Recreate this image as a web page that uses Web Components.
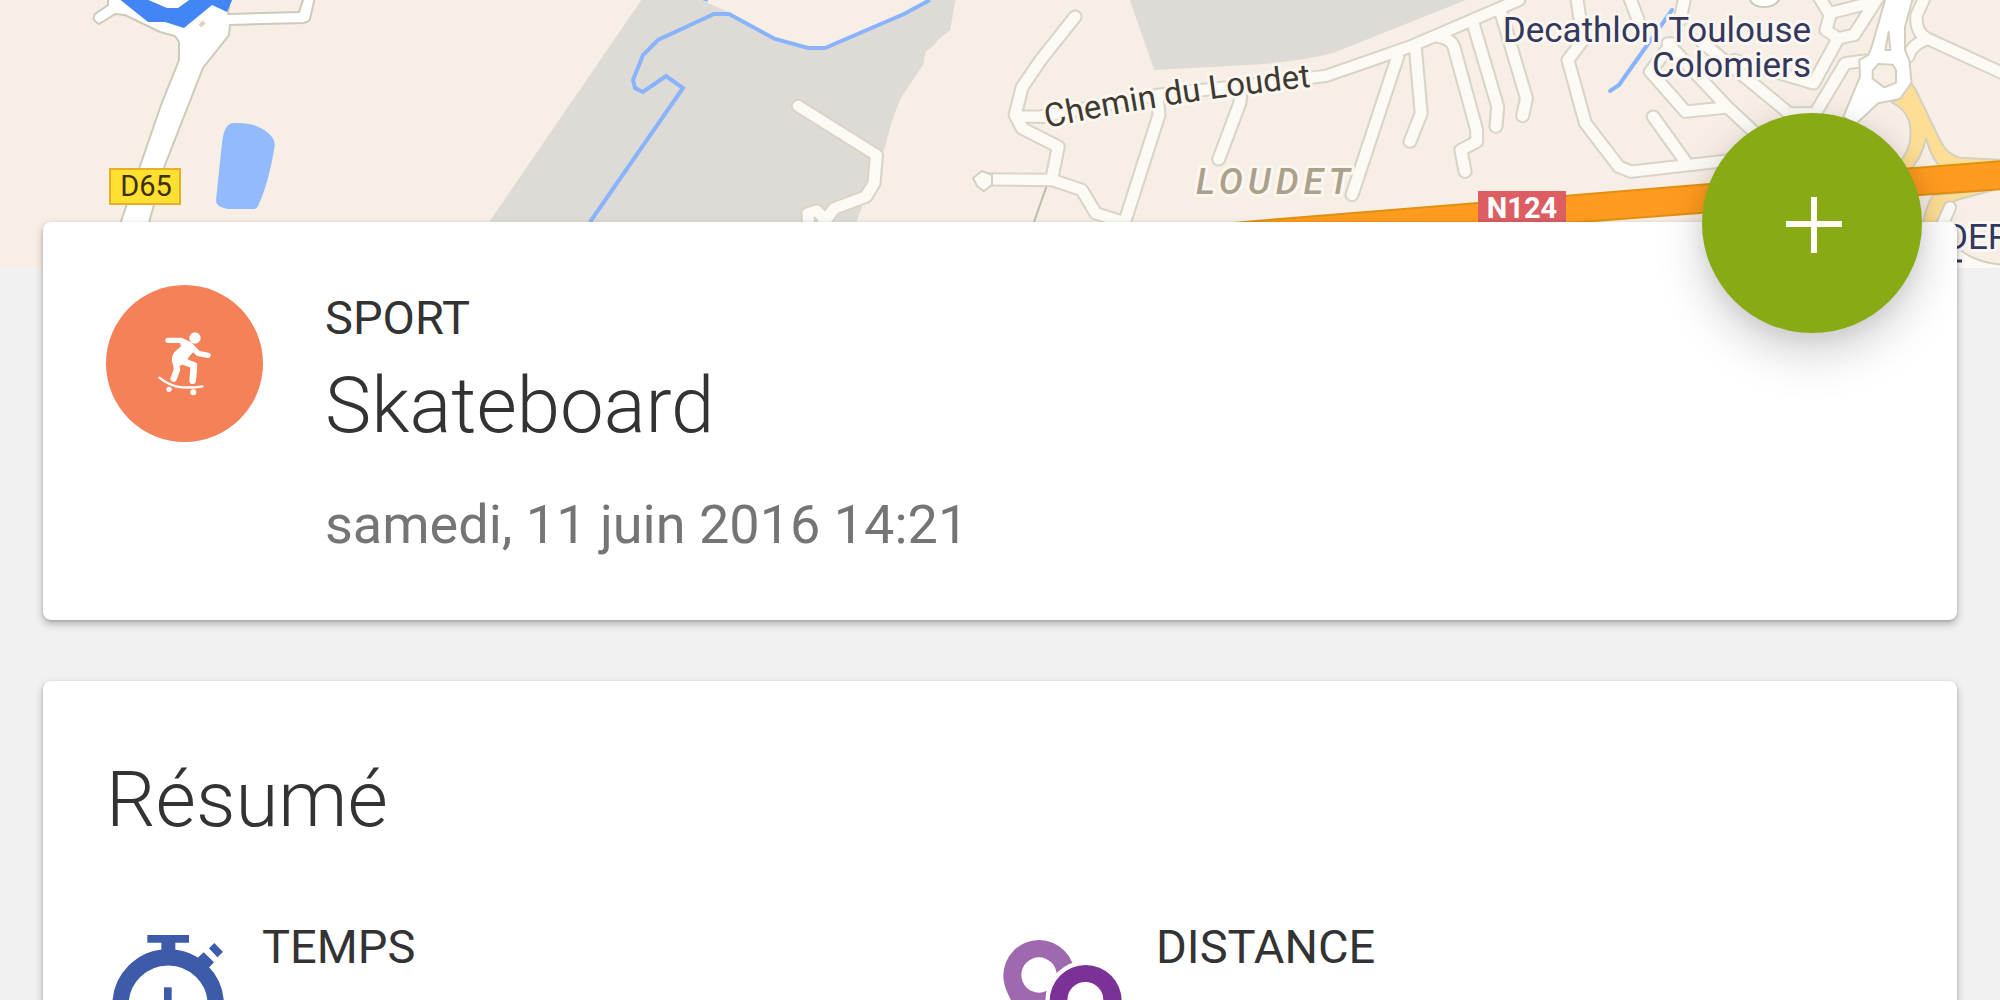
<!DOCTYPE html>
<html lang="fr">
<head>
<meta charset="utf-8">
<meta name="viewport" content="width=device-width, initial-scale=1">
<title>Skateboard</title>
<style>
  body { margin: 0; background: #f1f1f1; color: #333; font-family: Roboto, "Liberation Sans", sans-serif; }
</style>
</head>
<body>
<activity-page>
  <activity-map slot="map"></activity-map>
  <surface-card>
    <activity-header kind="SPORT" name="Skateboard" date="samedi, 11 juin 2016 14:21" datetime="2016-06-11T14:21"></activity-header>
    <fab-button slot="action" label="Ajouter"></fab-button>
  </surface-card>
  <surface-card>
    <summary-section heading="Résumé">
      <stat-item label="TEMPS"><stopwatch-icon slot="icon"></stopwatch-icon></stat-item>
      <stat-item label="DISTANCE"><pins-icon slot="icon"></pins-icon></stat-item>
    </summary-section>
  </surface-card>
</activity-page>

<script>
class BaseElement extends HTMLElement {
  connectedCallback() {
    if (this.shadowRoot) return;
    this.attachShadow({ mode: 'open' }).innerHTML = this.render();
  }
  attr(name) { return this.getAttribute(name) || ''; }
}

customElements.define('activity-page', class extends BaseElement {
  render() {
    return `<style>
      :host { display: block; height: 100vh; overflow: hidden; }
      main { display: flex; flex-direction: column; gap: 61px; margin-top: -46px; padding: 0 43px 61px; position: relative; }
    </style>
    <slot name="map"></slot>
    <main><slot></slot></main>`;
  }
});

customElements.define('surface-card', class extends BaseElement {
  render() {
    return `<style>
      :host { display: block; position: relative; background: #fff; border-radius: 8px; padding: 0 63px;
        box-shadow: 0 4px 8px rgba(0,0,0,.26), 0 1px 3px rgba(0,0,0,.16); }
    </style><slot></slot><slot name="action"></slot>`;
  }
});

customElements.define('fab-button', class extends BaseElement {
  render() {
    return `<style>
      :host { position: absolute; top: -109px; right: 35px; }
      button { display: flex; align-items: center; justify-content: center; width: 220px; height: 220px;
        padding: 0; border: 0; border-radius: 50%; background: #88aa14; cursor: pointer;
        box-shadow: 0 20px 48px rgba(0,0,0,.18), 0 4px 20px rgba(0,0,0,.08); }
      svg { width: 60px; height: 60px; }
    </style>
    <button type="button" aria-label="${this.attr('label')}">
      <svg viewBox="0 0 60 60" aria-hidden="true"><path d="M32 4V60M4 31H60" stroke="#fff" stroke-width="6"/></svg>
    </button>`;
  }
});

customElements.define('activity-header', class extends BaseElement {
  render() {
    return `<style>
      :host { display: flex; align-items: flex-start; gap: 62px; padding: 63px 0; }
      .text { padding-top: 5px; }
      .badge { flex: none; width: 157px; height: 157px; }
      p, h1 { margin: 0; }
      .kind { font-size: 47px; line-height: 56px; }
      h1 { margin-top: 14px; font-size: 78px; line-height: 92px; font-weight: 300; }
      time { display: block; margin-top: 41px; font-size: 54px; line-height: 64px; color: #757575; }
    </style>
    <svg class="badge" viewBox="77 76 471 471" aria-hidden="true">
      <circle cx="312.500" cy="311.500" r="235.500" fill="#f58159"/>
      <g fill="none" stroke="#fff" stroke-linecap="round" stroke-linejoin="round">
        <path d="M263 242H302L330 256L353 281L383 287" stroke-width="16"/>
        <path d="M303 303L341 317L337 363" stroke-width="20"/>
        <path d="M285 300L290 330L280 357" stroke-width="19"/>
        <path d="M237 354Q268 380 305 383Q337 385 366 380" stroke-width="7"/>
      </g>
      <g fill="#fff">
        <path d="M298 248L325 247L347 270L336 281Q322 293 320 306L300 318L278 314Q270 294 282 278L302 260Z"/>
        <circle cx="344" cy="235" r="17"/><circle cx="266" cy="389" r="8"/><circle cx="339" cy="398" r="9"/>
      </g>
    </svg>
    <div class="text">
      <p class="kind">${this.attr('kind')}</p>
      <h1>${this.attr('name')}</h1>
      <time datetime="${this.attr('datetime')}">${this.attr('date')}</time>
    </div>`;
  }
});

customElements.define('summary-section', class extends BaseElement {
  render() {
    return `<style>
      :host { display: block; padding: 73px 0; }
      h2 { margin: 0; font-size: 78px; line-height: 92px; font-weight: 300; }
      .grid { display: grid; grid-template-columns: 1fr 1fr; margin-top: 73px; }
    </style>
    <h2>${this.attr('heading')}</h2>
    <div class="grid"><slot></slot></div>`;
  }
});

customElements.define('stat-item', class extends BaseElement {
  render() {
    return `<style>
      :host { display: flex; align-items: flex-start; gap: 32px; }
      p { margin: 0; font-size: 47px; line-height: 56px; }
    </style>
    <slot name="icon"></slot><p>${this.attr('label')}</p>`;
  }
});

const iconStyle = `<style>:host { display: block; flex: none; width: 124px; height: 160px; } svg { display: block; width: 100%; height: 100%; }</style>`;

customElements.define('stopwatch-icon', class extends BaseElement {
  render() {
    return `${iconStyle}<svg viewBox="78 57 372 480" aria-hidden="true" fill="#3d5ba9">
      <path d="M202 105H327V128H286V160H244V128H202Z"/>
      <path d="M403 129L429 156L412 172L387 145ZM371 157L402 187L382 208L346 180Z"/>
      <circle cx="264.500" cy="315" r="143" fill="none" stroke="#3d5ba9" stroke-width="49"/>
      <path d="M252 262H275V330H252Z"/>
    </svg>`;
  }
});

customElements.define('pins-icon', class extends BaseElement {
  render() {
    return `${iconStyle}<svg viewBox="60 57 372 480" aria-hidden="true">
      <path fill="#9e69af" fill-rule="evenodd" d="M177 120A107 107 0 0 1 284 227C284 290 210 370 177 450C144 370 70 290 70 227A107 107 0 0 1 177 120ZM177 172A53 53 0 1 0 177 278A53 53 0 1 0 177 172Z"/>
      <path fill="#7b3196" stroke="#fff" stroke-width="26" paint-order="stroke" d="M317 195A108 108 0 0 1 425 303C425 370 350 440 317 520C284 440 209 370 209 303A108 108 0 0 1 317 195Z"/>
      <circle cx="316" cy="300" r="54" fill="#fff"/>
    </svg>`;
  }
});

customElements.define('activity-map', class extends BaseElement {
  render() {
    return `<style>
      :host { display: block; height: 268px; background: #f7eee5; }
      svg { display: block; width: 100%; height: 100%; }
      text { paint-order: stroke; stroke: #fbf6f0; stroke-width: 6px; stroke-linejoin: round; }
      .place { font-size: 35px; fill: #33385f; }
      .street { font-size: 33px; fill: #3e3a30; }
      .district { font-size: 36px; font-style: italic; font-weight: 500; fill: #aba08a; letter-spacing: 5px; }
      .shield { font-size: 29px; stroke: none; text-anchor: middle; }
    </style>
    <svg viewBox="0 0 2000 268" preserveAspectRatio="xMidYMin slice" role="img" aria-label="Carte">
      <defs>
        <g id="roads" fill="none" stroke-linejoin="round" stroke-linecap="round">
          <g transform="scale(.351 .3333)">
            <path transform="translate(1282 0)" d="M992 318L1215 465L1208 550L1185 590L1095 625L1050 690M1022 690L1020 640L1045 632L1066 655"/>
            <g transform="translate(2707 0)">
              <path d="M356 50L258 180L205 262L185 345L205 385L308 440L290 535M195 350H280M100 538L290 540L375 570L415 640L490 665M490 690L595 345L590 290M765 478L825 310L830 270"/>
              <path d="M260 350L590 285L830 258L1070 228L1310 140L1620 0M1145 585L1275 170M1310 425L1342 340L1325 140M1467 515L1455 450L1500 425L1500 390L1435 140Q1425 115 1390 110M1555 380L1560 320L1490 70"/>
            </g>
            <g transform="translate(4132 0)">
              <path d="M206 348L217 295L145 40M360 -10L378 120L335 180L385 370L480 500L515 515L810 480M578 350L670 485M510 -10L535 60M668 -10L655 60"/>
              <path d="M630 130L570 215L670 335L790 322M620 130L690 210L790 322L900 430M720 130L850 240L965 340H1040L1125 190L1180 182M810 180L1035 250L1105 115"/>
              <path d="M1050 -10L1082 45L1070 90L1105 115L1150 105L1220 -10M1085 38L1210 5"/>
            </g>
          </g>
          <path transform="translate(1800 0) scale(.3333)" d="M375 -10L350 45Q345 95 380 115L620 225M325 170Q335 135 375 120"/>
        </g>
        <path id="chemin" d="M1047 128Q1170 101 1330 85"/>
      </defs>

      <g fill="#dedbd6">
        <path transform="translate(450 0) scale(.351 .3333)" d="M545 0L112 665H1158L1240 440Q1262 340 1290 285L1350 190L1355 155L1380 135L1390 120L1425 90L1440 0H1370L1295 43L1070 142L1020 145L925 118L800 40L715 0Z"/>
        <path transform="translate(950 0) scale(.351 .3333)" d="M512 0L582 210L850 195Q1000 185 1090 160L1470 0Z"/>
      </g>
      <path fill="none" stroke="#8ab3fd" stroke-width="4" d="M590 222L683 88L666 76L643 92L635 88L633 80L643 55L658 40L714 14H729L775 39L808 48H825L904 14L930 0M702 -2L708 0"/>
      <path fill="#94bafe" d="M234 123Q260 122 272 137Q276 142 274 150Q268 185 258 206Q257 209 253 209H230Q216 208 216 200L222 143Q224 123 234 123Z"/>
      <path fill="none" stroke="#bdbbad" d="M1047 185L1034 222" stroke-width="2"/>

      <use href="#roads" stroke="#d8d5c8" stroke-width="43"/>
      <use href="#roads" stroke="#fdfaf5" stroke-width="31"/>
      <path fill="#fdfaf5" stroke="#d4d1c3" stroke-width="2" d="M973 178L982 171L992 175V185L984 191L977 186Z"/>
      <path fill="#fff" stroke="#ccc9ba" stroke-width="2" d="M1749 -2Q1752 7 1764 7Q1776 7 1780 -2Z"/>
      <g transform="translate(1800 0) scale(.3333)" stroke="#d4d0c0" stroke-width="6" stroke-linejoin="round">
        <path fill="#fff" fill-rule="evenodd" d="M258 -10L215 140L205 165L178 180L180 230L130 350L165 375L235 310L300 297L335 250L328 180L315 150V80L340 -10ZM235 192L218 212V236L253 262L288 248V210L278 194ZM266 95L256 150H271Z"/>
        <path fill="#fede95" d="M275 307L302 295L333 250L345 265L425 430Q445 465 480 473L620 480V510H430Q395 480 378 415Q365 480 320 520L295 490Q340 445 330 375Q322 330 275 307Z"/>
        <path fill="#fede95" d="M365 690Q375 620 400 585L580 570L470 600Q420 630 400 690Z"/>
        <path fill="none" stroke-width="42" stroke-linecap="round" d="M415 700L450 622"/>
        <path fill="none" stroke="#fdfaf5" stroke-width="31" stroke-linecap="round" d="M415 700L450 622"/>
        <path fill="#fdfaf5" d="M470 740Q520 790 620 795V820H440Z"/>
      </g>
      <path fill="#ff9b1f" stroke="#e0910f" stroke-width="2" d="M1190 227L1256 221L1478 203L1710 184L2004 161V189L1920 195L1700 213L1500 228Z"/>
      <path fill="none" stroke="#8ab3fd" stroke-width="4" stroke-linecap="round" d="M1610 91L1619 85L1672 10"/>

      <path fill="#fff" stroke="#cdcabb" stroke-width="2" d="M108 -3V5L95 14Q91 20 99 24Q106 20 115 14L125 15L160 32L175 36L179 42V60L161 105L118 230H147L165 165L203 68L229 35L230 25L303 23Q309 22 310 19L315 -3H304L299 12L228 14L230 -3Z"/>
      <path fill="#4285f4" d="M118 -2L148 22H165L184 28L212 5L227 12L233 -2H192L178 8H167L146 -1Z"/>
      <path stroke="#d9d4ba" stroke-width="4" d="M200 26L204 22"/>

      <rect x="110" y="169" width="70" height="35" fill="#ffdf30" stroke="#e5b025" stroke-width="2"/>
      <text class="shield" x="146" y="196" fill="#3c3000">D65</text>
      <rect x="1478" y="191" width="88" height="40" fill="#dc5e63"/>
      <text class="shield" x="1522" y="218" fill="#fff" font-weight="700">N124</text>
      <text class="place" text-anchor="end" x="1811" y="42">Decathlon Toulouse</text>
      <text class="place" text-anchor="end" x="1811" y="77">Colomiers</text>
      <text class="place" x="1945" y="249">DER</text>
      <path stroke="#33385f" stroke-width="3" d="M1950 261H1962"/>
      <text class="street"><textPath href="#chemin">Chemin du Loudet</textPath></text>
      <text class="district" x="1196" y="194">LOUDET</text>
    </svg>`;
  }
});
</script>
</body>
</html>
